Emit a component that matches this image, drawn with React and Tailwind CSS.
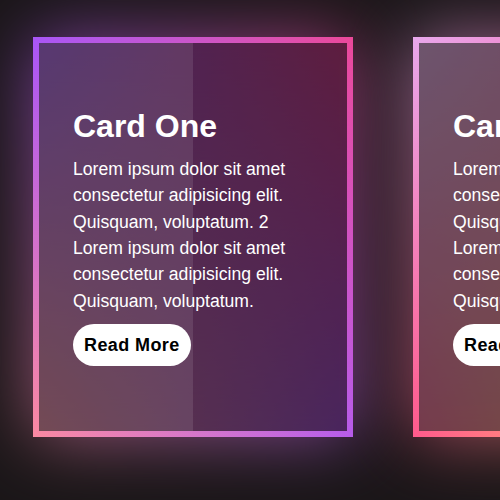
import React from "react";

const cards = [
  {
    title: "Card One",
    top: "bg-linear-to-r from-[#a855f7] to-[#ec4899]",
    bottom: "bg-linear-to-r from-[#fb8aa2] to-[#b65cec]",
  },
  {
    title: "Card Two",
    top: "bg-linear-to-r from-[#e8a8ec] to-[#f450a4]",
    bottom: "bg-linear-to-r from-[#ff5a8c] to-[#ffc050]",
  },
];

const text =
  "Lorem ipsum dolor sit amet consectetur adipisicing elit. Quisquam, voluptatum. 2 Lorem ipsum dolor sit amet consectetur adipisicing elit. Quisquam, voluptatum.";

// two stacked gradients = corner colours blended both ways
const Fill = ({ card }) => (
  <>
    <div className={`absolute inset-0 ${card.bottom}`} />
    <div
      className={`absolute inset-0 ${card.top} [mask-image:linear-gradient(to_bottom,black,transparent)]`}
    />
  </>
);

const Card = ({ card }) => (
  <div className="relative w-[320px] h-[400px] shrink-0">
    <div className="absolute inset-0 blur-[35px] opacity-60">
      <Fill card={card} />
    </div>
    <Fill card={card} />
    <div className="absolute inset-[6px] bg-black/60">
      <div className="absolute left-0 top-0 h-full w-1/2 bg-white/10" />
    </div>
    <div className="relative h-full flex flex-col justify-center items-start px-[40px] text-white">
      <h2 className="text-[32px] font-bold leading-[1.15]">{card.title}</h2>
      <p className="mt-[11px] text-[17.6px] leading-[1.5]">{text}</p>
      <button className="mt-[10px] h-[42px] px-[11px] rounded-full bg-white text-black text-[18px] font-bold tracking-[0.4px]">
        Read More
      </button>
    </div>
  </div>
);

const App = () => {
  return (
    <div
      className="w-[500px] h-[500px] overflow-hidden bg-[#1a1618] flex gap-[60px] pl-[33px] pt-[37px]"
      style={{ fontFamily: '"Liberation Sans", Arial, sans-serif' }}
    >
      {cards.map((card) => (
        <Card key={card.title} card={card} />
      ))}
    </div>
  );
};

export default App;
